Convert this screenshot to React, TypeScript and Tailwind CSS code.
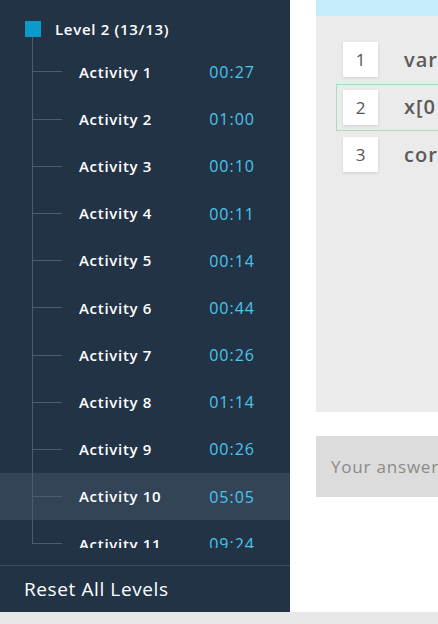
const activities = [
  { name: "Activity 1", time: "00:27" },
  { name: "Activity 2", time: "01:00" },
  { name: "Activity 3", time: "00:10" },
  { name: "Activity 4", time: "00:11" },
  { name: "Activity 5", time: "00:14" },
  { name: "Activity 6", time: "00:44" },
  { name: "Activity 7", time: "00:26" },
  { name: "Activity 8", time: "01:14" },
  { name: "Activity 9", time: "00:26" },
  { name: "Activity 10", time: "05:05", active: true },
  { name: "Activity 11", time: "09:24" },
];

const lines = [
  { n: 1, code: "var" },
  { n: 2, code: "x[0", active: true },
  { n: 3, code: "cor" },
];

function ActivityRow({ name, time, active, last }: { name: string; time: string; active?: boolean; last?: boolean }) {
  return (
    <div className={`flex items-center h-[47.2px] shrink-0 pr-[35px] ${active ? "bg-[#334457]" : ""}`}>
      <div className="ml-[32px] w-[30px] self-stretch flex flex-col">
        <div className="flex-1 border-l border-b border-[#4e5d6e]" />
        <div className={`flex-1 ${last ? "" : "border-l border-[#4e5d6e]"}`} />
      </div>
      <span className="ml-[17px] text-[15px] font-semibold text-white tracking-[0.7px] whitespace-nowrap">{name}</span>
      <span className="ml-auto text-[16px] text-[#4cc4ec] tracking-[1px]">{time}</span>
    </div>
  );
}

export default function App() {
  return (
    <div className="w-[438px] h-[624px] flex flex-col overflow-hidden bg-white font-['Open_Sans',sans-serif]">
      <div className="flex flex-1 min-h-0">
        <aside className="w-[290px] shrink-0 bg-[#223346] flex flex-col">
          <div className="h-[548px] overflow-hidden flex flex-col">
            <div className="flex items-center pl-[25px] pt-[21px]">
              <div className="w-4 h-4 bg-[#0a9acb]" />
              <span className="ml-[14px] text-[15px] font-semibold text-white leading-4 tracking-[0.7px]">Level 2 (13/13)</span>
            </div>
            <div className="ml-[32px] h-[11.4px] shrink-0 border-l border-[#4e5d6e]" />
            {activities.map((a, i) => (
              <ActivityRow key={a.name} {...a} last={i === activities.length - 1} />
            ))}
          </div>
          <div className="mt-[17px] border-t border-[#3c4c5d] flex-1 flex items-center pl-[24px]">
            <span className="text-[19px] font-medium text-white tracking-[0.6px]">Reset All Levels</span>
          </div>
        </aside>
        <main className="flex-1 pl-[26px] flex flex-col">
          <div className="h-4 bg-[#c7ecfb]" />
          <div className="h-[396px] bg-[#ebebeb] pl-[20px] pt-[20px] flex flex-col">
            {lines.map((l) => (
              <div
                key={l.n}
                className={`flex items-center h-[47.5px] p-[6px] border ${l.active ? "border-[#a9dcba]" : "border-transparent"}`}
              >
                <div className="w-[35px] h-[35px] bg-white shadow-[0_1px_3px_rgba(0,0,0,0.12)] flex items-center justify-center text-[17px] text-[#555]">
                  {l.n}
                </div>
                <span className="ml-[26px] text-[20px] font-semibold text-[#5a5a5a] whitespace-nowrap tracking-[1px]">{l.code}</span>
              </div>
            ))}
          </div>
          <div className="mt-[24px] h-[61px] bg-[#dcdcdc] flex items-center pl-[15px]">
            <span className="text-[17px] text-[#8a8a8a] whitespace-nowrap tracking-[0.8px]">Your answer</span>
          </div>
        </main>
      </div>
      <div className="h-[12px] bg-[#e8e8e8] shrink-0" />
    </div>
  );
}
